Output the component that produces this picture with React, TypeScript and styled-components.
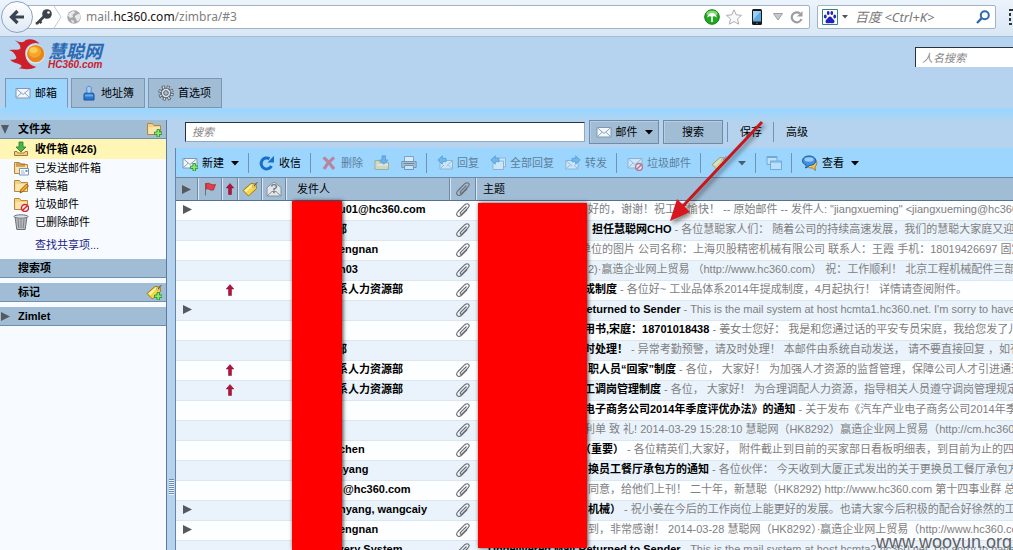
import React from "react";
import styled, { createGlobalStyle } from "styled-components";

const GlobalStyle = createGlobalStyle`
  * { box-sizing: border-box; }
  body {
    margin: 0;
    overflow: hidden;
    background: #b5d3ee;
    color: #000;
    font: 11px/18px "Liberation Sans", "Noto Sans CJK SC", sans-serif;
  }
  button, input { font: inherit; color: inherit; border-radius: 0; }
  button { background: none; border: 0; padding: 0; white-space: nowrap; }
  svg { display: block; flex: none; }
`;

/* ---------- layout shells ---------- */

const Page = styled.div`
  height: 100vh;
  display: flex;
  flex-direction: column;
  overflow: hidden;
  position: relative;
`;

const BrowserBar = styled.div`
  flex: none;
  height: 37px;
  display: flex;
  align-items: center;
  gap: 7px;
  padding: 0 0 2px 1px;
  background: linear-gradient(#ecf3fb, #d9e7f5);
  border-bottom: 1px solid #a4bed6;
  font: 12px/22px "Noto Sans", "Noto Sans CJK SC", sans-serif;
`;

const BackButton = styled.button`
  flex: none;
  width: 32px;
  height: 32px;
  border: 1px solid #8ba3bd;
  border-radius: 50%;
  background: linear-gradient(#fdfeff, #dfe9f4);
  display: grid;
  place-items: center;
  margin-right: -24px;
  z-index: 1;
`;

const Field = styled.div`
  height: 24px;
  display: flex;
  align-items: center;
  background: #fff;
  border: 1px solid #a2b3c6;
  border-radius: 2px;
`;

const UrlField = styled(Field)`
  flex: 1;
  padding: 0 5px 0 18px;
`;

const Address = styled.div`
  flex: 1;
  color: #808080;
  margin-left: 4px;
  b { color: #111; font-weight: 400; }
`;

const SiteIcon = styled.span`
  margin-left: 4px;
`;

const FieldIcons = styled.div`
  display: flex;
  align-items: center;
  gap: 6px;
`;

const EngineField = styled(Field)`
  flex: none;
  width: 179px;
  padding: 0 5px 0 4px;
  gap: 4px;
`;

const EngineInput = styled.input`
  flex: 1;
  min-width: 0;
  border: 0;
  padding: 0 0 0 3px;
  outline: 0;
  background: none;
  font-size: 13px;
  &::placeholder { color: #777; font-style: italic; opacity: 1; }
`;

const ChromeEdge = styled.div`
  flex: none;
  width: 10px;
  padding-left: 6px;
  overflow: hidden;
`;

const Header = styled.header`
  flex: none;
  height: 41px;
  display: flex;
  align-items: flex-start;
  justify-content: space-between;
  padding-left: 9px;
`;

const Logo = styled.a`
  display: flex;
  gap: 3px;
  padding-top: 1px;
  color: #2c69b2;
  text-decoration: none;
`;

const LogoName = styled.span`
  display: flex;
  flex-direction: column;
  font: italic bold 18px/20px "Noto Sans CJK SC", sans-serif;
  padding-top: 2px;
`;

const LogoDomain = styled.span`
  color: #c8202b;
  font: italic bold 10px/10px "Liberation Sans", sans-serif;
`;

const PeopleSearch = styled.input`
  width: 98px;
  height: 20px;
  margin-top: 10px;
  padding: 0 6px;
  background: #fff;
  border: solid #26323e;
  border-width: 1px 0 0 1px;
  outline: 0;
  &::placeholder { color: #888; font-style: italic; opacity: 1; }
`;

const Tabs = styled.nav`
  flex: none;
  display: flex;
  gap: 3px;
  padding-left: 5px;
`;

const Tab = styled.button<{ $active?: boolean }>`
  height: 30px;
  display: flex;
  align-items: center;
  gap: 4px;
  padding: 0 10px 0 9px;
  border: 1px solid #7d96b0;
  background: ${(p) => (p.$active ? "#9cd6fe" : "#a1bdd6")};
  border-bottom-color: ${(p) => (p.$active ? "#9cd6fe" : "#7d96b0")};
`;

const Body = styled.div`
  flex: 1;
  min-height: 0;
  display: flex;
  background: linear-gradient(#9cd6fe 0, #9cd6fe 3px, #b5d3ee 14px);
`;

/* ---------- sidebar ---------- */

const Sidebar = styled.aside`
  flex: none;
  width: 167px;
  margin-top: 12px;
  background: #f7fbff;
  border-right: 1px solid #5d7b99;
  display: flex;
  flex-direction: column;
  gap: 5px;
`;

const SectionTitle = styled.h2`
  margin: 0;
  height: 19px;
  display: flex;
  align-items: center;
  padding-right: 4px;
  background: #a1bdd6;
  border-bottom: 1px solid #6f8faf;
  font-size: 11px;
  font-weight: 700;
`;

const TitleToggle = styled.span`
  width: 18px;
  padding-left: 1px;
`;

const TitleText = styled.span`
  flex: 1;
`;

const FolderList = styled.ul`
  list-style: none;
  margin: 0;
  padding: 0;
`;

const Folder = styled.li<{ $active?: boolean }>`
  height: ${(p) => (p.$active ? 20 : 18)}px;
  display: flex;
  align-items: center;
  gap: 6px;
  padding-left: 13px;
  background: ${(p) => (p.$active ? "#fff6b5" : "transparent")};
  font-weight: ${(p) => (p.$active ? 700 : 400)};
`;

const ShareLink = styled.a`
  display: block;
  padding: 5px 0 0 35px;
  color: #1b1b86;
  text-decoration: none;
`;

const Splitter = styled.div`
  flex: none;
  width: 8px;
  display: flex;
  flex-direction: column;
  align-items: center;
  justify-content: flex-end;
  padding-bottom: 55px;
`;

const Grip = styled.div`
  width: 5px;
  height: 16px;
  background: repeating-linear-gradient(#6b8cae 0 1px, #e9f4fd 1px 2px);
`;

/* ---------- main ---------- */

const Main = styled.main`
  flex: 1;
  min-width: 0;
  display: flex;
  flex-direction: column;
`;

const SearchRow = styled.form`
  flex: none;
  height: 40px;
  display: flex;
  align-items: center;
  gap: 4px;
  padding: 8px 0 0 10px;
`;

const SearchInput = styled.input`
  width: 400px;
  height: 20px;
  padding: 0 6px;
  background: #fff;
  border: 1px solid #8fa9c2;
  border-top-color: #26323e;
  border-left-color: #26323e;
  outline: 0;
  &::placeholder { color: #888; font-style: italic; opacity: 1; }
`;

const PushButton = styled.button<{ $w: number }>`
  width: ${(p) => p.$w}px;
  height: 24px;
  display: flex;
  align-items: center;
  justify-content: center;
  gap: 4px;
  background: #a1bdd6;
  border: 1px solid #6f8ba8;
  box-shadow: inset 1px 1px #b7cee2;
`;

const PlainButton = styled.button`
  padding: 0 7px 0 8px;
`;

const Divider = styled.span`
  width: 1px;
  height: 20px;
  background: #6f93b3;
`;

const Toolbar = styled.div`
  flex: none;
  height: 29px;
  display: flex;
  align-items: center;
  padding-left: 1px;
  background: #9cd6fe;
  border-left: 1px solid #6487a8;
  ${Divider} { margin: 0 5px 0 3px; }
`;

const Tool = styled.button`
  display: flex;
  align-items: center;
  gap: 4px;
  padding: 0 6px 0 5px;
  &:disabled { color: #5d7e99; }
  &:disabled svg { opacity: 0.55; }
`;

const CaretSlot = styled.span`
  margin-left: 3px;
`;

const MailList = styled.section`
  flex: 1;
  min-height: 0;
  position: relative;
  overflow: hidden;
  background: #fcfeff;
  border-left: 1px solid #6487a8;
`;

const Table = styled.table`
  width: 100%;
  table-layout: fixed;
  border-collapse: separate;
  border-spacing: 0;
`;

const Col = styled.col<{ $w?: number }>`
  width: ${(p) => (p.$w ? `${p.$w}px` : "auto")};
`;

const Th = styled.th<{ $pad?: number }>`
  height: 24px;
  padding: 0 0 0 ${(p) => p.$pad ?? 0}px;
  background: #a1bdd6;
  border: solid #6f89a5;
  border-width: 1px 1px 1px 0;
  border-bottom-color: #54718e;
  box-shadow: inset 1px 0 #dbe8f4;
  font-weight: 400;
  text-align: left;
  svg { margin: 0 auto; }
  &:last-child { border-right: 0; }
  &:first-child { box-shadow: none; }
`;

const Tr = styled.tr`
  &:nth-child(even) { background: #eaf3fb; }
`;

const Td = styled.td<{ $bold?: boolean; $pad?: number }>`
  height: 20px;
  padding: 0 0 2px ${(p) => p.$pad ?? 0}px;
  border-bottom: 1px solid #dbe7ef;
  line-height: 17px;
  white-space: nowrap;
  overflow: hidden;
  font-weight: ${(p) => (p.$bold ? 700 : 400)};
  svg { margin: 0 auto; }
`;

const Masked = styled.span<{ $w: number }>`
  display: inline-block;
  width: ${(p) => p.$w}px;
`;

const Preview = styled.span`
  color: #7f7f7f;
`;

const Redaction = styled.div<{ $left: number; $top: number; $w: number; $bottom: number }>`
  position: absolute;
  left: ${(p) => p.$left}px;
  top: ${(p) => p.$top}px;
  bottom: ${(p) => p.$bottom}px;
  width: ${(p) => p.$w}px;
  background: #fe0000;
  box-shadow: 1px 0 4px rgba(0, 0, 0, 0.75);
`;

const Pointer = styled.svg`
  position: absolute;
  left: 660px;
  top: 112px;
  filter: drop-shadow(2px 3px 2px rgba(0, 0, 0, 0.45));
  pointer-events: none;
`;

const Watermark = styled.div`
  position: absolute;
  right: 1px;
  bottom: -2px;
  color: #5b6068;
  font-size: 18px;
  line-height: 20px;
  text-shadow: 0 0 1px #fff;
`;

/* ---------- icons ---------- */

const Icon = ({ children, w = 16, h = 16, box }: { children: React.ReactNode; w?: number; h?: number; box?: string }) => (
  <svg width={w} height={h} viewBox={box ?? `0 0 ${w} ${h}`} fill="none" aria-hidden="true">
    {children}
  </svg>
);

const Caret = ({ color = "#000" }) => (
  <Icon w={8} h={8}><path d="M0 2h8L4 6.500z" fill={color} /></Icon>
);
const Expand = () => (
  <Icon w={9} h={9}><path d="M0 0v9l9-4.500z" fill="#555a60" /></Icon>
);
const Collapse = () => (
  <Icon w={8} h={9}><path d="M0 0h8L4 9z" fill="#555a60" /></Icon>
);

const mailShape = (
  <>
    <path d="M1 3.500h14v9.500H1z" fill="#f1f7fc" stroke="#8297ad" />
    <path d="M1 3.500l7 6 7-6M1 13l5.200-5M15 13l-5.200-5" stroke="#8ea4bb" />
  </>
);
const folderShape = (
  <>
    <path d="M1.500 13.500v-11h5l1.500 2h6.500v9z" fill="#f3d183" stroke="#b9873a" />
    <path d="M2.500 13V6h11.500v7z" fill="#fbe5ab" />
  </>
);
const plusShape = (
  <path d="M11 8.500h2.500V11H16v2.500h-2.500V16H11v-2.500H8.500V11H11z" fill="#8be86c" stroke="#1d8a2c" strokeWidth=".8" />
);
const banShape = (
  <>
    <circle cx="12" cy="12" r="3.500" fill="#fff" stroke="#d8232f" strokeWidth="1.500" />
    <path d="M9.700 14.300l4.600-4.600" stroke="#d8232f" strokeWidth="1.500" />
  </>
);
const tagShape = (
  <>
    <path d="M1 9.500L9 2.500l5 .5.500 4.500-8 7.500z" fill="#f8d648" stroke="#9a7a16" />
    <path d="M2.500 9.500l7-6 2 .2-7.500 7.500z" fill="#fff3a8" />
    <circle cx="11.800" cy="5" r="1.200" fill="#fff" stroke="#8b6d16" strokeWidth=".6" />
    <path d="M12 5l3.500-4" stroke="#555" />
  </>
);

const MailIcon = () => <Icon>{mailShape}</Icon>;
const MailNewIcon = () => <Icon>{mailShape}{plusShape}</Icon>;
const SpamIcon = () => <Icon>{mailShape}{banShape}</Icon>;
const TagIcon = () => <Icon>{tagShape}</Icon>;
const TagNewIcon = () => <Icon>{tagShape}{plusShape}</Icon>;
const FolderNewIcon = () => <Icon>{folderShape}{plusShape}</Icon>;
const JunkFolderIcon = () => <Icon>{folderShape}{banShape}</Icon>;
const DraftsIcon = () => (
  <Icon>{folderShape}<path d="M7 15l1-3.500L13.500 6l2 2-5.500 5.500z" fill="#f5a623" stroke="#7c4c11" strokeWidth=".8" /></Icon>
);
const SentIcon = () => (
  <Icon>
    {folderShape}
    <path d="M3 4h9M3 6h9" stroke="#a8702c" />
    <path d="M6.500 8.500h9v6.500h-9z" fill="#fff" stroke="#7895b5" />
    <path d="M8 11h3M8 13h4" stroke="#9ab0c8" /><path d="M12.500 10h2v2h-2z" fill="#4c8fd6" />
  </Icon>
);
const InboxIcon = () => (
  <Icon>
    <path d="M1.500 10.500v4h13v-4h-2.500l-1 1.500H5l-1-1.500z" fill="#f0cd83" stroke="#a97a35" />
    <path d="M6 1h4v5h3l-5 5-5-5h3z" fill="#49b648" stroke="#217a2c" strokeWidth=".8" />
  </Icon>
);
const TrashIcon = () => (
  <Icon>
    <path d="M2 2.500h12l-1.800 13H3.800z" fill="#b9bcc0" stroke="#6d7176" />
    <path d="M5 5l.8 9M8 5v9M11 5l-.8 9" stroke="#7c8085" />
    <ellipse cx="8" cy="2.500" rx="7" ry="1.700" fill="#dfe2e5" stroke="#6d7176" />
  </Icon>
);
const PersonIcon = () => (
  <Icon>
    <path d="M3 15V9.500Q3 8 5 8h6q2 0 2 1.500V15z" fill="#2a78cf" stroke="#15509b" />
    <path d="M4 9.500h8v2H4z" fill="#67aaf0" />
    <path d="M6.200 8L5.500 2.500Q8-.5 10.500 2.500L9.800 8z" fill="#a5cff7" stroke="#477fbb" strokeWidth=".8" />
  </Icon>
);
const GearIcon = () => (
  <Icon>
    <circle cx="8" cy="8" r="6.200" stroke="#59626c" strokeWidth="3.200" strokeDasharray="2.900 1.970" />
    <circle cx="8" cy="8" r="4.900" fill="#dbe2e8" stroke="#59626c" strokeWidth="1.400" />
    <circle cx="8" cy="8" r="6" stroke="#dbe2e8" strokeWidth="2" strokeDasharray="1.300 3.412" strokeDashoffset="-.8" />
    <circle cx="8" cy="8" r="2.300" fill="#a1bdd6" stroke="#59626c" />
  </Icon>
);
const RefreshIcon = () => (
  <Icon>
    <path d="M12.500 11A5.500 5.500 0 1 1 10.500 3.700" stroke="#1670c9" strokeWidth="3" />
    <path d="M8.500 7.500h6.500V.8z" fill="#1670c9" />
  </Icon>
);
const DeleteIcon = () => (
  <Icon><path d="M2.500 2.500Q7 6 13 14M13 2.500Q7 7 3 14" stroke="#d2424e" strokeWidth="3.200" /></Icon>
);
const MoveIcon = () => (
  <Icon>
    <path d="M1 14.500v-9h4l1 2h8.500v7z" fill="#f3dc92" stroke="#a88b47" />
    <path d="M3 10h11" stroke="#fff6cf" strokeWidth="2" />
    <path d="M8 .8h3.500V5H14L9.700 9.300 5.500 5H8z" fill="#3f95e0" stroke="#1e62a8" strokeWidth=".7" />
  </Icon>
);
const PrintIcon = () => (
  <Icon>
    <path d="M3.500 1.500h9V7h-9z" fill="#fff" stroke="#6c7782" />
    <path d="M.8 6.500h14.400v6H.8z" fill="#a9b1b9" stroke="#59636e" />
    <path d="M3.500 10.500h9v4h-9z" fill="#e5f1fb" stroke="#59636e" />
    <path d="M2.500 8.500h11" stroke="#444d56" />
  </Icon>
);
const blueArrow = <path d="M.8 5l4.500-4.200v2.500H9v3.400H5.300v2.500z" fill="#4aa0e6" stroke="#1e6bb1" strokeWidth=".8" />;
const ReplyIcon = () => (
  <Icon>
    <path d="M3 5.500h12.500V14H3z" fill="#eef5fb" stroke="#8297ad" />
    <path d="M3 14l4-4M15.500 14l-4-4M15.500 5.500L9.500 11" stroke="#8ea4bb" />
    {blueArrow}
  </Icon>
);
const ReplyAllIcon = () => (
  <Icon>
    <path d="M5 3h10.500v9H5z" fill="#eef5fb" stroke="#8297ad" />
    <path d="M3 6h10.500v8.500H3z" fill="#eef5fb" stroke="#8297ad" />
    {blueArrow}
  </Icon>
);
const ForwardIcon = () => (
  <Icon>
    <path d="M.8 5.500H13V14H.8z" fill="#eef5fb" stroke="#8297ad" />
    <path d="M.8 14l4.500-4M13 14l-4-4M.8 5.500L7 11" stroke="#8ea4bb" />
    <g transform="translate(16 0) scale(-1 1)">{blueArrow}</g>
  </Icon>
);
const WindowsIcon = () => (
  <Icon>
    <path d="M1 1.500h10v8H1z" fill="#d7ebfb" stroke="#4f86b8" /><path d="M1 2.500h10" stroke="#4f86b8" />
    <path d="M4.500 6h11v8.500h-11z" fill="#cfe7fb" stroke="#4f86b8" /><path d="M4.500 7h11" stroke="#4f86b8" />
  </Icon>
);
const ViewIcon = () => (
  <Icon>
    <path d="M13.500 5q3 3-.5 7l.5 3.500-3-2.500q-3 .5-5-1.500z" fill="#f0c258" stroke="#9c6b17" strokeWidth=".8" />
    <path d="M7 1c3.800 0 6.800 2 6.800 4.800S10.800 10.500 7 10.500q-1 2-3.500 2.500 1-1.500.5-3.100C2 9.200.5 8 .5 5.800.5 3 3.200 1 7 1z" fill="#3f90e2" stroke="#17559e" />
    <ellipse cx="7" cy="4.500" rx="4.500" ry="2.200" fill="#9accf8" />
  </Icon>
);
const FlagIcon = () => (
  <Icon w={14} h={14}>
    <path d="M2.500 1v12.500" stroke="#7d6a6a" />
    <path d="M3 1.500q3-1 5 .8 2 1 4.500.2L10.500 8q-3 .5-4-.5T3 7z" fill="#e0404a" stroke="#a5202b" strokeWidth=".7" />
  </Icon>
);
const PriorityIcon = () => (
  <Icon w={8} h={12}><path d="M4 .5L7.800 5H5.500v6.500h-3V5H.2z" fill="#b5113c" stroke="#850a2b" strokeWidth=".5" /></Icon>
);
const StatusIcon = () => (
  <Icon>
    <path d="M1 6.500L8 1l7 5.500v8.500H1z" fill="#e4e7ea" stroke="#86909b" />
    <path d="M1 15l5-4.500h4l5 4.500" stroke="#86909b" />
    <path d="M5.500 5.500Q6 3.500 8 3.500t2.500 2Q10.500 7 8 8v1.500M8 10.500v1.700" stroke="#747c85" strokeWidth="1.600" />
  </Icon>
);
const ClipIcon = () => (
  <Icon>
    <path
      d="M11.500 4.500L5.800 10.200Q4.800 11.400 5.500 12T7.300 11.600L13 5.900Q15 3.600 13.600 2.300T9.800 2.700L3 9.500Q.7 12 2.300 13.700T6.500 13.300L12.500 7.300"
      stroke="#686d72"
      strokeWidth="1.100"
    />
  </Icon>
);

const BackIcon = () => (
  <Icon><path d="M15 8H3M8.500 2L2.500 8l6 6" stroke="#3a4450" strokeWidth="3.200" /></Icon>
);
const KeyIcon = () => (
  <Icon w={18} h={18}>
    <circle cx="12" cy="6" r="4.800" fill="#3b4249" /><circle cx="13.500" cy="4.500" r="1.300" fill="#fff" />
    <path d="M9.500 8L2 15.500M2 16.500V14M4.500 13l2 2" stroke="#3b4249" strokeWidth="2.600" />
  </Icon>
);
const ChevronEdge = () => (
  <Icon w={9} h={22}><path d="M1 0l7 11-7 11" stroke="#c3c9cf" /></Icon>
);
const GlobeIcon = () => (
  <Icon>
    <circle cx="8" cy="8" r="6.800" fill="#a6a8ab" />
    <path d="M3 4.500q3-3 5-2.500l1 2-2.500 1.500L7 8 4.500 9 2 7zM10 6l3.500-1.500 1 3.500-1.500 3.500-2 1-1-3-1.500-1.500zM5 11l2.500.5L8 14l-2-.5z" fill="#e9eaeb" />
  </Icon>
);
const UmbrellaIcon = () => (
  <Icon>
    <circle cx="8" cy="8" r="7.300" fill="#22a722" stroke="#167818" />
    <ellipse cx="8" cy="4.500" rx="5.500" ry="3" fill="#7ee06b" />
    <path d="M3.200 8.500Q4 4 8 4t4.800 4.500Q10 6.800 8 7.200 6 6.800 3.200 8.500zM7.200 7h1.600v6H7.200z" fill="#fff" />
  </Icon>
);
const StarIcon = () => (
  <Icon><path d="M8 .8l2.200 5 5.300.5-4 3.600 1.200 5.300L8 12.500l-4.700 2.700 1.200-5.300-4-3.600 5.300-.5z" fill="#fafafa" stroke="#a9adb2" /></Icon>
);
const PhoneIcon = () => (
  <Icon w={18} h={16}>
    <rect x="4" width="10" height="16" rx="1.500" fill="#171a1d" />
    <path d="M5 2h8v10.500H5z" fill="#5fa9dd" /><path d="M5 2h8L5 11z" fill="#9dcdf0" />
    <circle cx="9" cy="14.200" r=".8" fill="#777" />
  </Icon>
);
const DropIcon = () => (
  <Icon w={12} h={12}><path d="M1.500 2.500h9L6 9z" fill="#c6c9cc" stroke="#9da1a6" /></Icon>
);
const ReloadIcon = () => (
  <Icon w={14} h={14}>
    <path d="M11.500 9A5 5 0 1 1 10 3.500" stroke="#9a9ea3" strokeWidth="2.200" />
    <path d="M7 6.500h5.500V1z" fill="#9a9ea3" />
  </Icon>
);
const PawIcon = () => (
  <Icon>
    <path d="M.5.5h15v15H.5z" fill="#fff" stroke="#2a8585" />
    <path d="M8 7.500q1.500 0 2.500 2 2.500 1.500 2 3.500t-4.500 1q-4 1-4.500-1t2-3.500q1-2 2.500-2z" fill="#2222c4" />
    <g fill="#2222c4">
      <ellipse cx="3.300" cy="7.500" rx="1.400" ry="1.900" /><ellipse cx="6.200" cy="4" rx="1.400" ry="2" />
      <ellipse cx="9.800" cy="4" rx="1.400" ry="2" /><ellipse cx="12.700" cy="7.500" rx="1.400" ry="1.900" />
    </g>
  </Icon>
);
const GlassIcon = () => (
  <Icon w={14} h={14}>
    <circle cx="8.800" cy="5.200" r="4" stroke="#2f6cab" strokeWidth="2" /><path d="M5.800 8.200L1 13" stroke="#2f6cab" strokeWidth="2.400" />
  </Icon>
);
const FlameLogo = () => (
  <Icon w={36} h={32} box="28 116 108 96">
    <path
      d="M46 122C60 131 72 131 78 122C92 117 108 121 120 133C100 127 82 137 77 155C74 177 86 197 110 203C94 212 74 210 56 207C66 205 68 200 62 196C50 190 38 190 32 181C44 182 51 180 50 174C46 162 38 155 28 152C44 149 54 154 62 148C64 138 56 132 46 122Z"
      fill="#cf1f2b"
    />
    <circle cx="107" cy="164" r="29" fill="#dcebf8" />
    <circle cx="108" cy="163" r="26" fill="#e8861c" />
    <ellipse cx="105" cy="158" rx="19" ry="17" fill="#f3a62b" />
    <ellipse cx="102" cy="153" rx="12" ry="9" fill="#fbcb55" />
  </Icon>
);

/* ---------- data ---------- */

interface Mail {
  thread?: boolean;
  urgent?: boolean;
  noClip?: boolean;
  from?: string;
  fromMask?: number;
  subject?: string;
  mask?: number;
  text: string;
}

const BOUNCE = "Undelivered Mail Returned to Sender";
const HR = "工业品体系人力资源部";

const mails: Mail[] = [
  { thread: true, from: "u01@hc360.com", fromMask: 48, mask: 108, text: '好的，谢谢！祝工作愉快！ -- 原始邮件 -- 发件人: "jiangxueming" <jiangxueming@hc360.com>' },
  { from: "部", fromMask: 45, mask: 112, subject: "担任慧聪网CHO", text: "各位慧聪家人们： 随着公司的持续高速发展，我们的慧聪大家庭又迎来了" },
  { from: "engnan", fromMask: 48, mask: 100, text: "单位的图片 公司名称：上海贝股精密机械有限公司 联系人：王霞 手机：18019426697 固定电话" },
  { from: "n03", fromMask: 48, mask: 108, text: "2)·赢造企业网上贸易 （http://www.hc360.com） 祝：工作顺利！ 北京工程机械配件三部" },
  { urgent: true, from: HR, fromMask: 2, mask: 104, subject: "成制度", text: "各位好~ 工业品体系2014年提成制度，4月起执行！ 详情请查阅附件。" },
  { thread: true, subject: BOUNCE, mask: 8, text: "This is the mail system at host hcmta1.hc360.net. I'm sorry to have to inform you" },
  { mask: 104, subject: "用书,宋庭：18701018438", text: "姜女士您好： 我是和您通过话的平安专员宋庭，我给您发了儿童" },
  { noClip: true, from: "部", fromMask: 45, mask: 104, subject: "时处理！", text: "异常考勤预警，请及时处理！ 本邮件由系统自动发送， 请不要直接回复 ，如有疑问" },
  { urgent: true, from: HR, fromMask: 2, mask: 108, subject: "职人员“回家”制度", text: "各位， 大家好！ 为加强人才资源的监督管理，保障公司人才引进通道" },
  { urgent: true, from: HR, fromMask: 2, mask: 104, subject: "工调岗管理制度", text: "各位， 大家好！ 为合理调配人力资源，指导相关人员遵守调岗管理规定" },
  { mask: 104, subject: "电子商务公司2014年季度评优办法》的通知", text: "关于发布《汽车产业电子商务公司2014年季度" },
  { mask: 104, text: "利单 致 礼! 2014-03-29 15:28:10 慧聪网（HK8292）赢造企业网上贸易（http://cm.hc360.com）" },
  { from: "chen", fromMask: 48, mask: 100, subject: "（重要）", text: "各位精英们,大家好， 附件截止到目前的买家部日看板明细表，到目前为止的四" },
  { from: "nyang", fromMask: 45, mask: 108, subject: "换员工餐厅承包方的通知", text: "各位伙伴： 今天收到大厦正式发出的关于更换员工餐厅承包方" },
  { from: "@hc360.com", fromMask: 52, mask: 108, text: "同意，给他们上刊！ 二十年，新慧聪（HK8292) http://www.hc360.com 第十四事业群 总监" },
  { thread: true, from: "nyang, wangcaiy", fromMask: 48, mask: 108, subject: "机械）", text: "祝小姜在今后的工作岗位上能更好的发展。也请大家今后积极的配合好徐然的工作" },
  { thread: true, from: "engnan", fromMask: 48, mask: 108, text: "到，非常感谢！ 2014-03-28 慧聪网（HK8292）·赢造企业网上贸易（http://www.hc360.com）" },
  { from: "Mail Delivery System", fromMask: 2, subject: BOUNCE, mask: 8, text: "This is the mail system at host hcmta2.hc360.net. I'm sorry to have to inform you" },
];

const MailRow = ({ mail }: { mail: Mail }) => (
  <Tr>
    <Td>{mail.thread && <Expand />}</Td>
    <Td />
    <Td>{mail.urgent && <PriorityIcon />}</Td>
    <Td />
    <Td />
    <Td $bold $pad={5}>
      {mail.fromMask && <Masked $w={mail.fromMask} />}
      {mail.from}
    </Td>
    <Td>{!mail.noClip && <ClipIcon />}</Td>
    <Td $pad={4}>
      {mail.mask && <Masked $w={mail.mask} />}
      {mail.subject && <b>{mail.subject}</b>}
      <Preview>
        {mail.subject && " - "}
        {mail.text}
      </Preview>
    </Td>
  </Tr>
);

/* ---------- page ---------- */

export default function App() {
  return (
    <Page>
      <GlobalStyle />
      <BrowserBar>
        <BackButton aria-label="后退"><BackIcon /></BackButton>
        <UrlField>
          <KeyIcon />
          <ChevronEdge />
          <SiteIcon><GlobeIcon /></SiteIcon>
          <Address>mail.<b>hc360.com</b>/zimbra/#3</Address>
          <FieldIcons>
            <UmbrellaIcon /><StarIcon /><PhoneIcon /><DropIcon /><ReloadIcon />
          </FieldIcons>
        </UrlField>
        <EngineField>
          <PawIcon />
          <Icon w={6} h={4}><path d="M0 0h6L3 3.500z" fill="#555" /></Icon>
          <EngineInput aria-label="百度" placeholder="百度 <Ctrl+K>" />
          <GlassIcon />
        </EngineField>
        <ChromeEdge>
          <Icon><path d="M1 1h14v14H1z" stroke="#333" strokeWidth="2" strokeDasharray="3 2" /></Icon>
        </ChromeEdge>
      </BrowserBar>

      <Header>
        <Logo href="#home">
          <FlameLogo />
          <LogoName>
            慧聪网
            <LogoDomain>HC360.com</LogoDomain>
          </LogoName>
        </Logo>
        <PeopleSearch aria-label="人名搜索" placeholder="人名搜索" />
      </Header>

      <Tabs>
        <Tab $active><MailIcon />邮箱</Tab>
        <Tab><PersonIcon />地址簿</Tab>
        <Tab><GearIcon />首选项</Tab>
      </Tabs>

      <Body>
        <Sidebar>
          <div>
            <SectionTitle>
              <TitleToggle><Collapse /></TitleToggle>
              <TitleText>文件夹</TitleText>
              <FolderNewIcon />
            </SectionTitle>
            <FolderList>
              <Folder $active><InboxIcon />收件箱 (426)</Folder>
              <Folder><SentIcon />已发送邮件箱</Folder>
              <Folder><DraftsIcon />草稿箱</Folder>
              <Folder><JunkFolderIcon />垃圾邮件</Folder>
              <Folder><TrashIcon />已删除邮件</Folder>
            </FolderList>
            <ShareLink href="#share">查找共享项...</ShareLink>
          </div>
          <SectionTitle><TitleToggle /><TitleText>搜索项</TitleText></SectionTitle>
          <SectionTitle><TitleToggle /><TitleText>标记</TitleText><TagNewIcon /></SectionTitle>
          <SectionTitle><TitleToggle><Expand /></TitleToggle><TitleText>Zimlet</TitleText></SectionTitle>
        </Sidebar>
        <Splitter><Grip /></Splitter>

        <Main>
          <SearchRow onSubmit={(e) => e.preventDefault()}>
            <SearchInput aria-label="搜索" placeholder="搜索" />
            <PushButton type="button" $w={70}><MailIcon />邮件<CaretSlot><Caret /></CaretSlot></PushButton>
            <PushButton $w={60}>搜索</PushButton>
            <Divider />
            <PlainButton type="button">保存</PlainButton>
            <Divider />
            <PlainButton type="button">高级</PlainButton>
          </SearchRow>

          <Toolbar>
            <Tool><MailNewIcon />新建<CaretSlot><Caret /></CaretSlot></Tool>
            <Divider />
            <Tool><RefreshIcon />收信</Tool>
            <Divider />
            <Tool disabled><DeleteIcon />删除</Tool>
            <Tool disabled aria-label="移动"><MoveIcon /></Tool>
            <Tool disabled aria-label="打印"><PrintIcon /></Tool>
            <Divider />
            <Tool disabled><ReplyIcon />回复</Tool>
            <Tool disabled><ReplyAllIcon />全部回复</Tool>
            <Tool disabled><ForwardIcon />转发</Tool>
            <Divider />
            <Tool disabled><SpamIcon />垃圾邮件</Tool>
            <Divider />
            <Tool disabled aria-label="标记"><TagIcon /></Tool>
            <Tool disabled aria-label="标记菜单"><Caret /></Tool>
            <Divider />
            <Tool disabled aria-label="新窗口"><WindowsIcon /></Tool>
            <Divider />
            <Tool><ViewIcon />查看<CaretSlot><Caret /></CaretSlot></Tool>
          </Toolbar>

          <MailList>
            <Table>
              <colgroup>
                <Col $w={22} /><Col $w={24} /><Col $w={16} /><Col $w={24} /><Col $w={24} />
                <Col $w={164} /><Col $w={26} /><Col />
              </colgroup>
              <thead>
                <tr>
                  <Th><Expand /></Th>
                  <Th><FlagIcon /></Th>
                  <Th><PriorityIcon /></Th>
                  <Th><TagIcon /></Th>
                  <Th><StatusIcon /></Th>
                  <Th $pad={11}>发件人</Th>
                  <Th><ClipIcon /></Th>
                  <Th $pad={7}>主题</Th>
                </tr>
              </thead>
              <tbody>
                {mails.map((mail, i) => <MailRow key={i} mail={mail} />)}
              </tbody>
            </Table>
            <Redaction $left={116} $top={24} $w={50} $bottom={0} />
            <Redaction $left={302} $top={26} $w={109} $bottom={2} />
          </MailList>
        </Main>
      </Body>

      <Pointer width="110" height="116" viewBox="660 112 110 116" aria-hidden="true">
        <path d="M762 122L683 206" stroke="#c8161d" strokeWidth="3" />
        <path d="M670 221L677 199L690 212Z" fill="#d8161d" />
      </Pointer>
      <Watermark>www.wooyun.org</Watermark>
    </Page>
  );
}
